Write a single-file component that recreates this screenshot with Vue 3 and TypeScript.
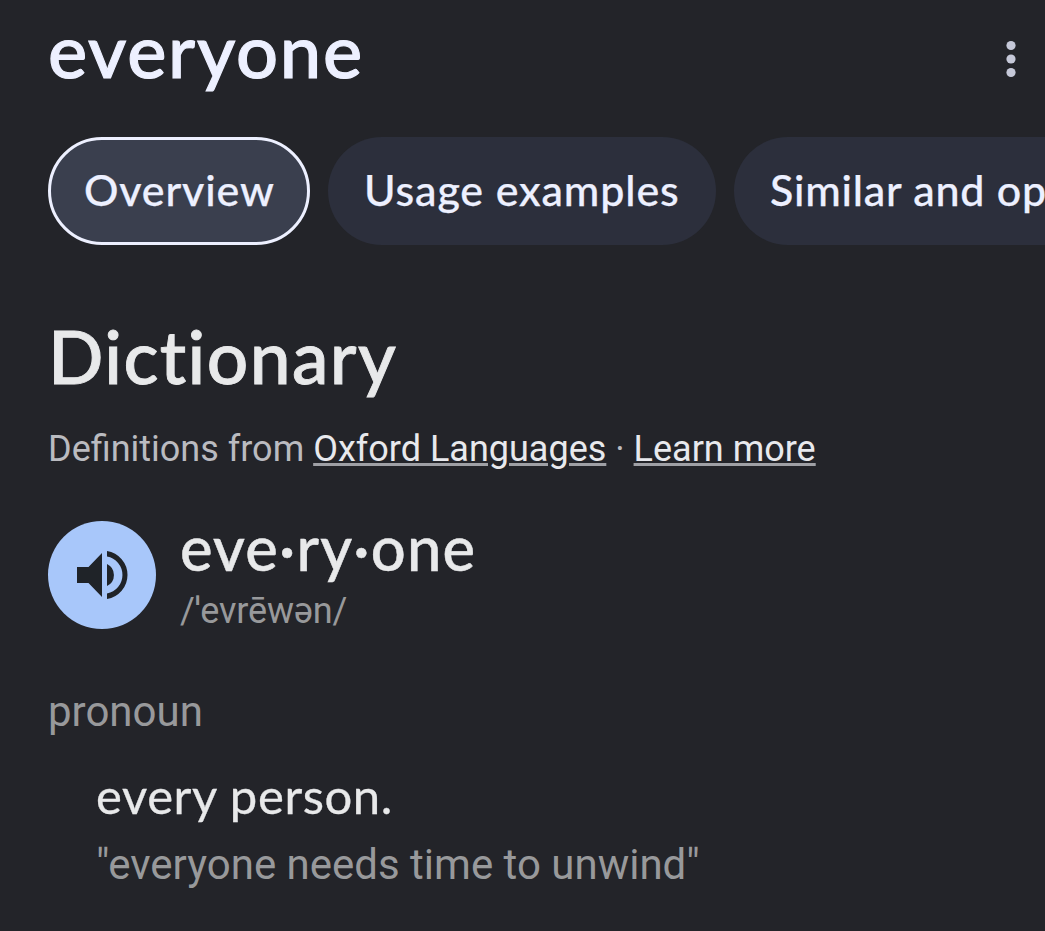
<script setup lang="ts">
const tabs: string[] = ['Overview', 'Usage examples', 'Similar and opposite']
</script>

<template>
  <main class="page">
    <header class="top">
      <h1>everyone</h1>
      <svg class="more" viewBox="0 0 12 38"><circle cx="6" cy="5.5" r="4.6" /><circle cx="6" cy="19" r="4.6" /><circle cx="6" cy="32.5" r="4.6" /></svg>
    </header>
    <nav class="tabs">
      <button v-for="(tab, i) in tabs" :key="tab" class="tab" :class="{ active: i === 0 }">{{ tab }}</button>
    </nav>
    <h2>Dictionary</h2>
    <p class="source">Definitions from <a>Oxford Languages</a> · <a>Learn more</a></p>
    <section class="pronounce">
      <button class="sound" aria-label="Listen">
        <svg viewBox="0 0 54 54"><path d="M2 19v16h11.5L27 49V5L13.500 19z" /><path d="M32 16v22a12.200 12.200 0 0 0 0-22zM32 3v5.500a18.800 18.800 0 0 1 0 37V51a24.300 24.300 0 0 0 0-48z" /></svg>
      </button>
      <div>
        <div class="syllables">eve·ry·one</div>
        <div class="phonetic">/ˈevrēwən/</div>
      </div>
    </section>
    <p class="pos">pronoun</p>
    <div class="entry">
      <p class="definition">every person.</p>
      <p class="example">"everyone needs time to unwind"</p>
    </div>
  </main>
</template>

<style>
body { background: #232429; }
</style>
<style scoped>
* { box-sizing: border-box; }
.page { width: 1045px; height: 931px; overflow: hidden; background: #232429; color: #e8e9ea; padding-left: 48px; font-family: Roboto, "Noto Sans", sans-serif; }
h1, h2, p { margin: 0; white-space: nowrap; }
h1, h2, .tab, .syllables, .definition { font-variant-ligatures: none; font-kerning: normal; }
.top { height: 137px; display: flex; justify-content: space-between; padding: 10px 28px 0 0; color: #edf0ff; }
h1 { font: 500 74px/80px Lato, sans-serif; letter-spacing: 1.75px; -webkit-text-stroke: 1.1px currentColor; }
.more { width: 12px; height: 38px; margin-top: 30px; fill: #c5c8d8; }
.tabs { display: flex; gap: 18px; height: 108px; }
.tab { flex: none; height: 108px; border: 0; border-radius: 54px; padding: 0 36px 3px; background: #2c2f3c; color: #edf0ff; font: 500 43px/104px Lato, sans-serif; letter-spacing: .85px; text-align: left; white-space: nowrap; -webkit-text-stroke: .25px currentColor; }
.tab:nth-child(1) { width: 262px; }
.tab:nth-child(2) { width: 388px; }
.tab:nth-child(3) { width: 600px; letter-spacing: .75px; }
.tab.active { background: #3a3f4e; border: 3px solid #edf0ff; padding: 0 33px 3px; line-height: 98px; }
h2 { font: 500 73px/90px Lato, sans-serif; letter-spacing: 1.4px; margin-top: 66px; -webkit-text-stroke: .9px currentColor; }
.source { font-size: 36px; line-height: 44px; margin-top: 26px; color: #babbc0; }
a { color: #e8e9ed; text-decoration: underline; text-decoration-color: #9fa0a5; text-decoration-thickness: 3px; text-underline-offset: 2px; text-decoration-skip-ink: auto; }
.pronounce { display: flex; gap: 24px; margin-top: 50px; height: 108px; }
.sound { width: 108px; height: 108px; border-radius: 50%; border: 0; background: #a8c7fa; display: grid; place-items: center; padding: 0; }
.sound svg { width: 54px; height: 54px; fill: #1f2328; }
.syllables { font: 500 61.5px/64px Lato, sans-serif; letter-spacing: 1.2px; height: 64px; margin-top: -6px; -webkit-text-stroke: .5px currentColor; }
.phonetic { font-size: 36px; line-height: 50px; color: #98999b; margin-top: 7px; letter-spacing: -.15px; }
.pos { font-size: 42px; line-height: 50px; color: #98999b; margin-top: 58px; }
.entry { padding-left: 48px; margin-top: 30px; }
.definition { font: 400 49px/56px Lato, sans-serif; letter-spacing: .6px; -webkit-text-stroke: .3px currentColor; }
.example { font-size: 42px; line-height: 50px; color: #98999b; margin-top: 17px; }
</style>
